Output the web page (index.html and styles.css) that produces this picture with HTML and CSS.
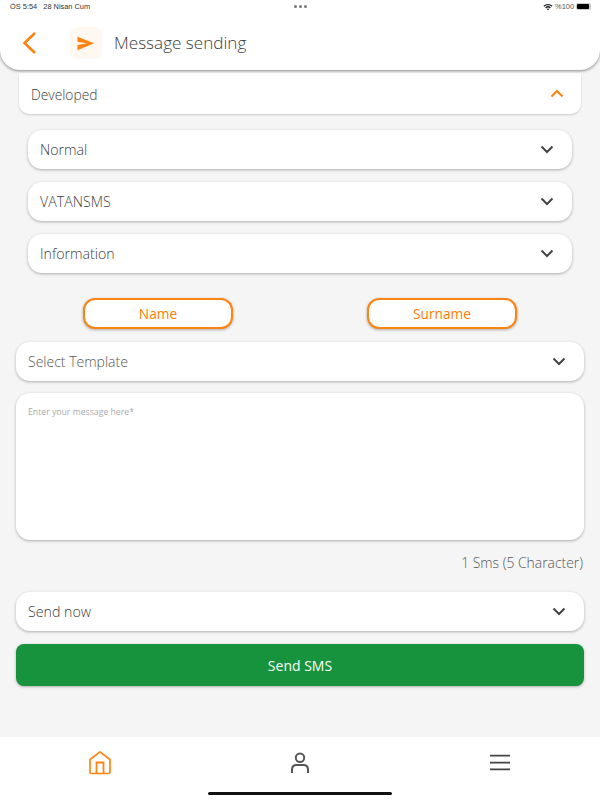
FILE: index.html
```html
<!DOCTYPE html>
<html lang="en">
<head>
<meta charset="utf-8">
<title>Message sending</title>
<link rel="stylesheet" href="styles.css">
</head>
<body>
<div class="app">
  <header class="header">
    <div class="status">
      <span class="status-time">ÖS 5:54&nbsp;&nbsp; 28 Nisan Cum</span>
      <span class="status-dots"><i></i><i></i><i></i></span>
      <span class="status-right">
        <svg class="wifi" viewBox="0 0 12 9" width="10" height="8"><path d="M0.5 3 A8 8 0 0 1 11.5 3 L10.3 4.2 A6.3 6.3 0 0 0 1.7 4.2 Z M2.6 5 A5 5 0 0 1 9.4 5 L8.2 6.2 A3.3 3.3 0 0 0 3.8 6.2 Z M4.6 7 A2 2 0 0 1 7.4 7 L6 8.6 Z" fill="#222"/></svg>
        <span>%100</span>
        <span class="battery"><span class="battery-fill"></span></span>
      </span>
    </div>
    <div class="title-row">
      <svg class="back" viewBox="0 0 14 22" width="14" height="22"><path d="M13 1 L2.5 11 L13 21" fill="none" stroke="#ff8311" stroke-width="2.6"/></svg>
      <span class="title-icon">
        <svg viewBox="0 0 20 16" width="18" height="15"><path d="M0.5 0.5 L19 7.8 L0.5 15.5 L0.5 9.6 L11 7.8 L0.5 6 Z" fill="#ff8311"/></svg>
      </span>
      <h1 class="title">Message sending</h1>
    </div>
  </header>

  <main class="content">
    <div class="card card-dev">
      <span>Developed</span>
      <svg class="chev" viewBox="0 0 14 9" width="14" height="9"><path d="M1.5 7.5 L7 2 L12.5 7.5" fill="none" stroke="#ff8311" stroke-width="2"/></svg>
    </div>

    <div class="group">
      <div class="card select"><span>Normal</span><svg class="chev" viewBox="0 0 14 9" width="14" height="9"><path d="M1.5 1.5 L7 7 L12.5 1.5" fill="none" stroke="#444" stroke-width="2"/></svg></div>
      <div class="card select"><span>VATANSMS</span><svg class="chev" viewBox="0 0 14 9" width="14" height="9"><path d="M1.5 1.5 L7 7 L12.5 1.5" fill="none" stroke="#444" stroke-width="2"/></svg></div>
      <div class="card select"><span>Information</span><svg class="chev" viewBox="0 0 14 9" width="14" height="9"><path d="M1.5 1.5 L7 7 L12.5 1.5" fill="none" stroke="#444" stroke-width="2"/></svg></div>
    </div>

    <div class="tags">
      <button class="tag">Name</button>
      <button class="tag">Surname</button>
    </div>

    <div class="card select wide muted"><span>Select Template</span><svg class="chev" viewBox="0 0 14 9" width="14" height="9"><path d="M1.5 1.5 L7 7 L12.5 1.5" fill="none" stroke="#444" stroke-width="2"/></svg></div>

    <div class="card message">Enter your message here*</div>

    <div class="counter">1 Sms (5 Character)</div>

    <div class="card select wide"><span>Send now</span><svg class="chev" viewBox="0 0 14 9" width="14" height="9"><path d="M1.5 1.5 L7 7 L12.5 1.5" fill="none" stroke="#444" stroke-width="2"/></svg></div>

    <button class="send">Send SMS</button>
  </main>

  <nav class="nav">
    <svg viewBox="0 0 24 26" width="24" height="26"><path d="M3.5 23.5 Q2 23.5 2 22 V9.5 L12 1.8 L22 9.5 V22 Q22 23.5 20.5 23.5 Z" fill="none" stroke="#ff8311" stroke-width="1.7" stroke-linejoin="round"/><path d="M8.5 23.5 V12.5 H15.5 V23.5" fill="none" stroke="#ff8311" stroke-width="1.8"/></svg>
    <svg viewBox="0 0 24 26" width="24" height="26"><circle cx="12" cy="7.7" r="4.2" fill="none" stroke="#555" stroke-width="2"/><path d="M4 23 V19.5 Q4 15 8.5 15 H15.5 Q20 15 20 19.5 V23" fill="none" stroke="#555" stroke-width="2"/></svg>
    <svg viewBox="0 0 24 26" width="24" height="26"><path d="M2 5.7 H22 M2 12.7 H22 M2 19.3 H22" fill="none" stroke="#444" stroke-width="1.8"/></svg>
    <span class="home-bar"></span>
  </nav>
</div>
</body>
</html>
```

FILE: styles.css
```css
* { box-sizing: border-box; }
html, body { margin: 0; padding: 0; }
body {
  width: 600px;
  height: 800px;
  overflow: hidden;
  background: #f5f5f5;
  font-family: "Open Sans", "Noto Sans", sans-serif;
  font-weight: 300;
  color: #3d3d3d;
}
.app { display: flex; flex-direction: column; height: 800px; }

.header {
  height: 70px;
  background: #fff;
  border-radius: 0 0 20px 20px;
  box-shadow: 0 1px 3px rgba(0,0,0,.45);
  flex: none;
  position: relative;
  z-index: 1;
}
.status {
  height: 13px;
  padding: 0 9px 0 10px;
  display: flex;
  justify-content: space-between;
  align-items: center;
  font-family: "Liberation Sans", sans-serif;
  font-weight: 400;
  font-size: 7.4px;
  color: #333;
  position: relative;
}
.status-dots { position: absolute; left: 294px; top: 5px; display: flex; gap: 2px; }
.status-dots i { width: 3px; height: 3px; border-radius: 50%; background: #777; }
.status-right { display: flex; align-items: center; gap: 2px; color: #555; }
.wifi { display: block; }
.battery {
  width: 15px; height: 7px;
  border-radius: 2px;
  background: #ccc;
  padding: 1px 2px 1px 1px;
  display: block;
}
.battery-fill { display: block; width: 100%; height: 100%; background: #000; border-radius: 1px; }

.title-row {
  display: flex;
  align-items: center;
  height: 32px;
  margin-top: 14px;
  padding-left: 22px;
}
.back { flex: none; }
.title-icon {
  width: 32px; height: 32px;
  margin-left: 34px;
  background: #fff8f0;
  border-radius: 7px;
  display: flex;
  align-items: center;
  justify-content: center;
}
.title {
  margin: -2px 0 0 12px;
  font-size: 17.1px;
  font-weight: 300;
  color: #3d3d3d;
}

.content { flex: 1; display: flex; flex-direction: column; padding: 0 16px; }
.card {
  background: #fff;
  box-shadow: 0 1px 3px rgba(0,0,0,.3);
  display: flex;
  align-items: center;
  justify-content: space-between;
}
.card-dev {
  margin: 3px 3px 0;
  height: 41px;
  padding: 0 17px 0 12px;
  border-radius: 0 0 10px 10px;
  font-size: 13.8px;
  box-shadow: 0 1px 2px rgba(0,0,0,.18);
}
.card-dev span { position: relative; top: 1px; }
.group { display: flex; flex-direction: column; gap: 13px; padding: 16px 12px 0; }
.select {
  height: 39px;
  padding: 0 18px 0 12px;
  border-radius: 14px;
  font-size: 14.2px;
}
.tags { display: flex; justify-content: space-between; padding: 25px 67px 0; margin-bottom: 13px; }
.tag {
  width: 150px;
  height: 31px;
  background: #fff;
  border: 2px solid #ff8311;
  border-radius: 12px;
  color: #ff7a00;
  font: 500 13.7px "Open Sans", sans-serif;
  box-shadow: 0 1px 3px rgba(0,0,0,.3);
  padding: 0;
}
.muted { color: #555; font-size: 14px; }
.message {
  margin-top: 12px;
  height: 147px;
  border-radius: 14px;
  padding: 13px 12px;
  font-size: 8.7px;
  font-weight: 400;
  color: #aaa;
  align-items: flex-start;
  justify-content: flex-start;
}
.counter {
  height: 52px;
  padding: 13px 1px 0 0;
  text-align: right;
  font-size: 13.9px;
  color: #555;
}
.send {
  margin-top: 13px;
  height: 42px;
  border: 0;
  border-radius: 8px;
  background: #16933c;
  color: #fff;
  font: 400 14px "Open Sans", sans-serif;
  box-shadow: 0 1px 3px rgba(0,0,0,.3);
}

.nav {
  flex: none;
  height: 63px;
  background: #fff;
  display: flex;
  justify-content: space-between;
  align-items: flex-start;
  padding: 13px 88px 0;
  position: relative;
}
.home-bar {
  position: absolute;
  left: 208px;
  bottom: 5px;
  width: 184px;
  height: 3px;
  background: #111;
  border-radius: 2px;
}
```
